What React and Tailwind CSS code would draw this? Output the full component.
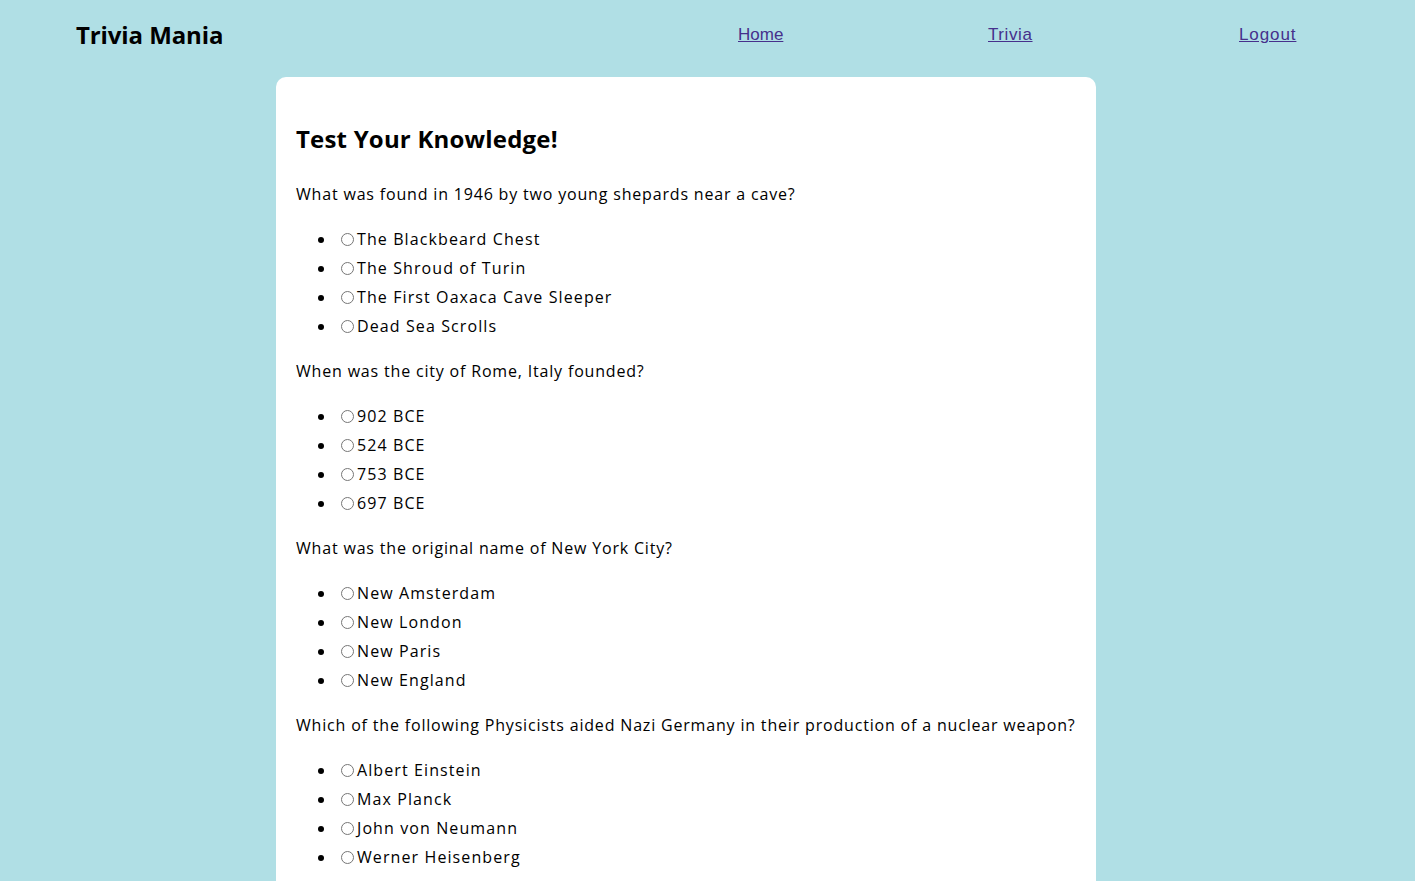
const questions = [
  {
    q: 'What was found in 1946 by two young shepards near a cave?',
    options: ['The Blackbeard Chest', 'The Shroud of Turin', 'The First Oaxaca Cave Sleeper', 'Dead Sea Scrolls'],
  },
  {
    q: 'When was the city of Rome, Italy founded?',
    options: ['902 BCE', '524 BCE', '753 BCE', '697 BCE'],
  },
  {
    q: 'What was the original name of New York City?',
    options: ['New Amsterdam', 'New London', 'New Paris', 'New England'],
  },
  {
    q: 'Which of the following Physicists aided Nazi Germany in their production of a nuclear weapon?',
    options: ['Albert Einstein', 'Max Planck', 'John von Neumann', 'Werner Heisenberg'],
  },
];

export default function App() {
  return (
    <div className="min-h-screen bg-[#b0dfe5] font-['Open_Sans',sans-serif] text-black">
      <header className="flex items-center h-[70px] pl-[76px]">
        <div className="w-[662px]">
          <h1 className="text-[24px] font-bold tracking-[-0.1px]">Trivia Mania</h1>
        </div>
        <nav className="flex font-['Liberation_Sans',Arial,sans-serif] text-[17px] text-[#46308c]">
          <div className="w-[250px]"><a href="#" className="underline">Home</a></div>
          <div className="w-[251px]"><a href="#" className="underline tracking-[0.6px]">Trivia</a></div>
          <div><a href="#" className="underline tracking-[0.9px]">Logout</a></div>
        </nav>
      </header>

      <main className="pt-[7px] pl-[276px]">
        <div className="w-[820px] bg-white rounded-[10px] p-5">
          <h2 className="my-5 text-[24px] leading-[43px] font-bold tracking-[0.2px]">Test Your Knowledge!</h2>
          {questions.map((item) => (
            <div key={item.q}>
              <p className="my-4 text-[16px] leading-[29px] tracking-[0.82px] whitespace-nowrap">{item.q}</p>
              <ul className="my-4 list-disc pl-10 text-[16px] tracking-[1.1px] marker:font-['Liberation_Sans'] marker:text-[19px]">
                {item.options.map((opt) => (
                  <li key={opt} className="h-[29px] leading-[27px]">
                    <label>
                      <input type="radio" name={item.q} className="ml-[5px] mr-[3px] w-[13px] h-[13px] align-[-1px]" />
                      {opt}
                    </label>
                  </li>
                ))}
              </ul>
            </div>
          ))}
        </div>
      </main>
    </div>
  );
}
